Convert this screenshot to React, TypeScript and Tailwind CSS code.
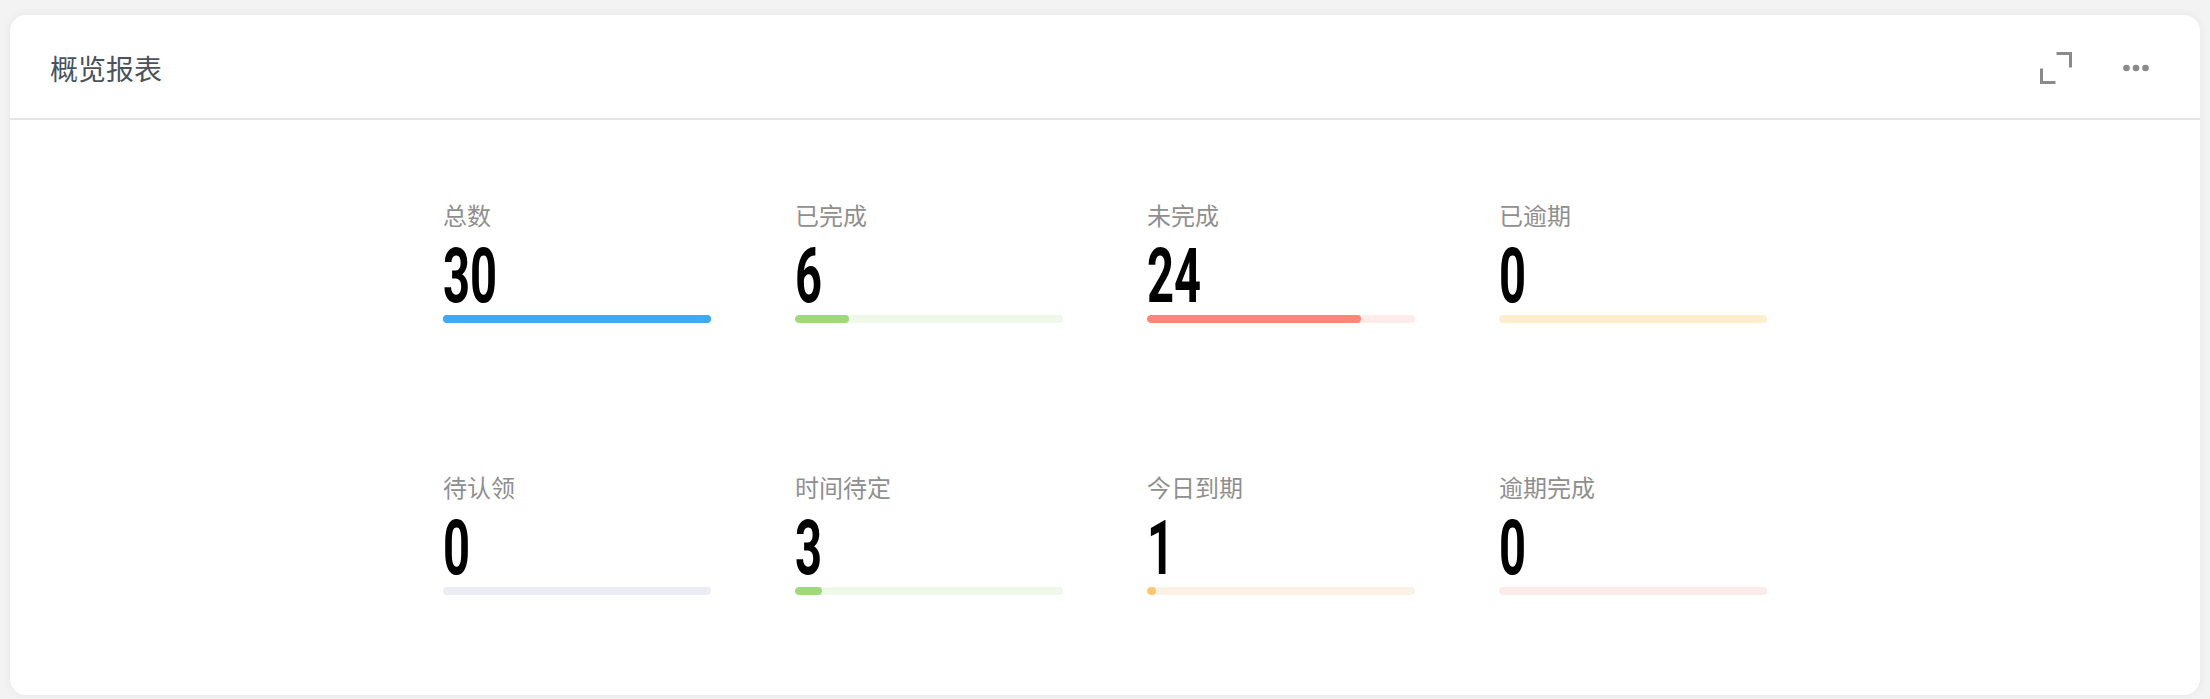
import React from "react";

type Stat = {
  label: string;
  value: number;
  fill: string;
  track: string;
};

const stats: Stat[] = [
  { label: "总数", value: 30, fill: "bg-[#3fa9f5]", track: "bg-[#3fa9f5]" },
  { label: "已完成", value: 6, fill: "bg-[#9ed97c]", track: "bg-[#eff8e9]" },
  { label: "未完成", value: 24, fill: "bg-[#ff8576]", track: "bg-[#feeceb]" },
  { label: "已逾期", value: 0, fill: "bg-[#fdc772]", track: "bg-[#ffedcc]" },
  { label: "待认领", value: 0, fill: "bg-[#b9b9d6]", track: "bg-[#ececf4]" },
  { label: "时间待定", value: 3, fill: "bg-[#9ed97c]", track: "bg-[#eff8e9]" },
  { label: "今日到期", value: 1, fill: "bg-[#fdc772]", track: "bg-[#fbf1e5]" },
  { label: "逾期完成", value: 0, fill: "bg-[#ff8576]", track: "bg-[#fdeaeb]" },
];

const TOTAL = 30;

function StatCard({ s }: { s: Stat }) {
  const pct = (s.value / TOTAL) * 100;
  return (
    <div className="flex flex-col w-[268px]">
      <div className="text-[24px] leading-[32px] text-[#8f8f8f] font-['Noto_Sans_CJK_SC','Noto_Sans',sans-serif]">
        {s.label}
      </div>
      <div className="h-[76px] mt-[7px] overflow-visible">
        <span className="inline-block origin-left scale-x-[0.62] text-[76px] leading-[76px] font-bold text-black font-['Roboto','Liberation_Sans',sans-serif] whitespace-nowrap">
          {s.value}
        </span>
      </div>
      <div className={`mt-[1px] h-[8px] w-full rounded-full overflow-hidden ${s.track}`}>
        <div
          className={`h-full rounded-full ${s.fill}`}
          style={{ width: `${pct}%` }}
        />
      </div>
    </div>
  );
}

export default function App() {
  return (
    <div className="w-[2210px] h-[699px] bg-[#f3f3f3] pt-[15px] px-[10px]">
      <div className="w-[2190px] h-[680px] bg-white rounded-[16px] shadow-[0_0_10px_rgba(0,0,0,0.06)] flex flex-col">
        <div className="h-[105px] flex items-center justify-between px-[40px] pt-[2px] border-b-2 border-[#e5e5e5]">
          <div className="text-[28px] text-[#4a525c] font-['Noto_Sans_CJK_SC','Noto_Sans',sans-serif]">
            概览报表
          </div>
          <div className="flex items-center gap-[51px] pr-[11px]">
            <svg width="32" height="32" viewBox="0 0 32 32" fill="none">
              <path d="M16.5 1.5 H30.5 V15.5" stroke="#8a8a8a" strokeWidth="3" />
              <path d="M1.5 16.5 V30.5 H15.5" stroke="#8a8a8a" strokeWidth="3" />
            </svg>
            <svg width="26" height="8" viewBox="0 0 26 8">
              <circle cx="3.5" cy="4" r="3.3" fill="#8a8a8a" />
              <circle cx="13" cy="4" r="3.3" fill="#8a8a8a" />
              <circle cx="22.5" cy="4" r="3.3" fill="#8a8a8a" />
            </svg>
          </div>
        </div>
        <div className="flex-1 flex justify-center pt-[79px]">
          <div className="grid grid-cols-[repeat(4,268px)] gap-x-[84px] gap-y-[148px] content-start">
            {stats.map((s) => (
              <StatCard key={s.label} s={s} />
            ))}
          </div>
        </div>
      </div>
    </div>
  );
}
